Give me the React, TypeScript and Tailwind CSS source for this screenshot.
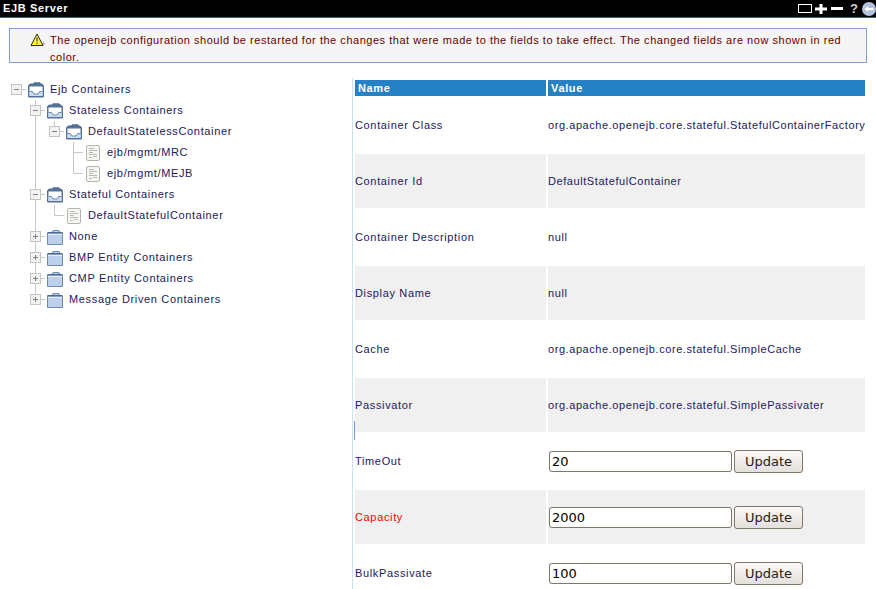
import React from 'react';

type Guide = 'blank' | 'pipe' | 'tee' | 'elbow' | 'stub';
type Kind = 'open' | 'closed' | 'doc';

const LINE = '#c8c8c8';

// one 19x21 indent cell of the tree: guide line plus optional expander box
const TreeCell = ({ guide, toggle }: { guide: Guide; toggle?: 'plus' | 'minus' }) => (
  <svg width="19" height="21" viewBox="0 0 19 21" className="shrink-0">
    {(guide === 'pipe' || guide === 'tee') && <path d="M9.5 0V21" stroke={LINE} fill="none" />}
    {guide === 'elbow' && <path d="M9.5 0V10.5" stroke={LINE} fill="none" />}
    {guide !== 'blank' && guide !== 'pipe' && <path d="M9.5 10.5H19" stroke={LINE} fill="none" />}
    {toggle && (
      <g>
        <rect x="4.5" y="5.5" width="10" height="10" fill="#f2f2f2" stroke="#c4c4c4" />
        <path d="M7 10.5H12" stroke="#808080" fill="none" />
        {toggle === 'plus' && <path d="M9.5 8V13" stroke="#808080" fill="none" />}
      </g>
    )}
  </svg>
);

const NodeIcon = ({ kind }: { kind: Kind }) => {
  if (kind === 'doc') {
    return (
      <svg width="16" height="16" viewBox="0 0 16 16" className="shrink-0">
        <rect x="1.5" y="0.5" width="13" height="15" rx="1.5" fill="#f6f6f2" stroke="#b4b4aa" />
        <path d="M4 3.5H9M4 5.5H12M4 7.5H8M4 9.5H12M8 11.5H12M4 12.5H7" stroke="#b8b8b8" fill="none" />
      </svg>
    );
  }
  if (kind === 'closed') {
    return (
      <svg width="16" height="16" viewBox="0 0 16 16" className="shrink-0">
        <path d="M0.5 3.5H5L6 1.5H12L13 3.5H15.5V15.5H0.5Z" fill="#bcd0ec" stroke="#6c8ab0" />
        <path d="M1 3H15V4.5H1Z" fill="#4a6a94" />
        <path d="M1 5.5H15" stroke="#e4edf8" />
      </svg>
    );
  }
  return (
    <svg width="16" height="16" viewBox="0 0 16 16" className="shrink-0">
      <path d="M0.5 3.5L2 2H5L6 0.8H12L13 2H14L15.5 3.5V15H0.5Z" fill="#557399" stroke="#557399" />
      <rect x="1.5" y="4.5" width="13" height="9.5" fill="#ffffff" />
      <path d="M1.5 9.5H4.5L6 12H10L11.5 9.5H14.5V14H1.5Z" fill="#cadaf0" />
      <path d="M1.5 9.5H4.5L6 12H10L11.5 9.5H14.5" stroke="#6c8ab0" fill="none" />
    </svg>
  );
};

const treeRows: { cells: [Guide, 'plus' | 'minus' | undefined][]; kind: Kind; label: string }[] = [
  { cells: [['stub', 'minus']], kind: 'open', label: 'Ejb Containers' },
  { cells: [['blank', undefined], ['tee', 'minus']], kind: 'open', label: 'Stateless Containers' },
  { cells: [['blank', undefined], ['pipe', undefined], ['elbow', 'minus']], kind: 'open', label: 'DefaultStatelessContainer' },
  { cells: [['blank', undefined], ['pipe', undefined], ['blank', undefined], ['tee', undefined]], kind: 'doc', label: 'ejb/mgmt/MRC' },
  { cells: [['blank', undefined], ['pipe', undefined], ['blank', undefined], ['elbow', undefined]], kind: 'doc', label: 'ejb/mgmt/MEJB' },
  { cells: [['blank', undefined], ['tee', 'minus']], kind: 'open', label: 'Stateful Containers' },
  { cells: [['blank', undefined], ['pipe', undefined], ['elbow', undefined]], kind: 'doc', label: 'DefaultStatefulContainer' },
  { cells: [['blank', undefined], ['tee', 'plus']], kind: 'closed', label: 'None' },
  { cells: [['blank', undefined], ['tee', 'plus']], kind: 'closed', label: 'BMP Entity Containers' },
  { cells: [['blank', undefined], ['tee', 'plus']], kind: 'closed', label: 'CMP Entity Containers' },
  { cells: [['blank', undefined], ['elbow', 'plus']], kind: 'closed', label: 'Message Driven Containers' },
];

const props: { name: string; value?: string; input?: string; changed?: boolean }[] = [
  { name: 'Container Class', value: 'org.apache.openejb.core.stateful.StatefulContainerFactory' },
  { name: 'Container Id', value: 'DefaultStatefulContainer' },
  { name: 'Container Description', value: 'null' },
  { name: 'Display Name', value: 'null' },
  { name: 'Cache', value: 'org.apache.openejb.core.stateful.SimpleCache' },
  { name: 'Passivator', value: 'org.apache.openejb.core.stateful.SimplePassivater' },
  { name: 'TimeOut', input: '20' },
  { name: 'Capacity', input: '2000', changed: true },
  { name: 'BulkPassivate', input: '100' },
];

const WarningIcon = () => (
  <svg width="15" height="14" viewBox="0 0 15 14" className="shrink-0">
    <path d="M7 1L13 12.5H1Z" fill="#fff04a" stroke="#2a2a20" strokeLinejoin="round" />
    <path d="M7 4.5V8.5M7 9.8V11" stroke="#222" fill="none" />
    <path d="M13 9L15 10.5L13.5 12Z" fill="#888" />
  </svg>
);

const HeaderIcons = () => (
  <div className="flex items-center h-full">
    <div className="w-[14px] h-[9px] border border-white mr-[3px]" />
    <svg width="12" height="10" viewBox="0 0 12 10" className="mr-[4px]">
      <path d="M4.5 0H7.5V3.5H12V6.5H7.5V10H4.5V6.5H0V3.5H4.5Z" fill="#fff" />
    </svg>
    <div className="w-[12px] h-[3px] bg-white mr-[7px]" />
    <span className="text-[13px] font-bold text-[#d0d0d0] w-[12px] leading-none tracking-normal">?</span>
    <svg width="14" height="14" viewBox="0 0 14 14">
      <circle cx="7" cy="7" r="7" fill="#b4c4de" />
      <path d="M2.5 7L6 4V6H11.5V8H6V10Z" fill="#fff" />
    </svg>
  </div>
);

export default function App() {
  return (
    <div className="w-[876px] h-[589px] overflow-hidden bg-white font-['Liberation_Sans',Arial,sans-serif] text-[11px] text-[#20205c] tracking-[0.65px]">
      <div className="h-[18px] bg-black border-b border-[#336699] flex items-center justify-between pl-[3px]">
        <span className="text-white font-bold text-[11px]">EJB Server</span>
        <HeaderIcons />
      </div>

      <div className="px-[9px] pt-[10px]">
        <div className="h-[35px] border border-[#80a0d8] bg-[#f5f5f5] flex pl-[20px] pt-[3px] gap-[5px] text-[#660000] tracking-[0.53px]">
          <div className="pt-[1px]"><WarningIcon /></div>
          <p className="leading-[17px] w-[800px]">
            The openejb configuration should be restarted for the changes that were made to the fields to take effect. The changed fields are now shown in red color.
          </p>
        </div>
      </div>

      <div className="flex relative pt-[16px]">
        <div className="w-[352px] shrink-0 pl-[7px]">
          {treeRows.map((row) => (
            <div key={row.label} className="flex items-center h-[21px]">
              {row.cells.map((c, i) => (
                <TreeCell key={i} guide={c[0]} toggle={c[1]} />
              ))}
              <div className="ml-[2px]"><NodeIcon kind={row.kind} /></div>
              <span className="ml-[6px] whitespace-nowrap">{row.label}</span>
            </div>
          ))}
        </div>

        <div className="flex-1 border-l border-[#cfe0f5] -mt-[1px]">
          <table className="border-separate border-spacing-[2px] table-fixed w-[514px]">
            <thead>
              <tr className="h-[16px] bg-[#2581c4] text-white font-bold text-left">
                <th className="w-[191px] p-0 pl-[3px] leading-[16px]">Name</th>
                <th className="p-0 pl-[3px] leading-[16px]">Value</th>
              </tr>
            </thead>
            <tbody>
              {props.map((p, i) => (
                <tr key={p.name} className={`h-[54px] ${i % 2 === 1 ? 'bg-[#f0f0f0]' : ''}`}>
                  <td className={`p-0 ${p.changed ? 'text-[#ff0000]' : ''}`}>{p.name}</td>
                  <td className="p-0 whitespace-nowrap tracking-[0.57px]">
                    {p.input !== undefined ? (
                      <div className="flex items-center pl-[1px] gap-[2px]">
                        <div className="rounded-[1px] bg-[#f0ebe6]">
                          <input
                            readOnly
                            value={p.input}
                            className="block w-[183px] h-[21px] rounded-[3px] border border-[#7f7568] bg-white px-[2px] text-[13px] tracking-normal text-black font-['DejaVu_Sans',sans-serif] outline-none"
                          />
                        </div>
                        <button className="w-[69px] h-[23px] pt-[1px] rounded-[3px] border border-[#7f7568] bg-gradient-to-b from-[#fbfaf9] to-[#e4e0da] text-[13px] tracking-normal text-[#222] font-['DejaVu_Sans',sans-serif]">
                          Update
                        </button>
                      </div>
                    ) : (
                      p.value
                    )}
                  </td>
                </tr>
              ))}
            </tbody>
          </table>
        </div>
        <div className="absolute left-[354px] top-[358px] w-px h-[19px] bg-[#8098c8]" />
      </div>
    </div>
  );
}
